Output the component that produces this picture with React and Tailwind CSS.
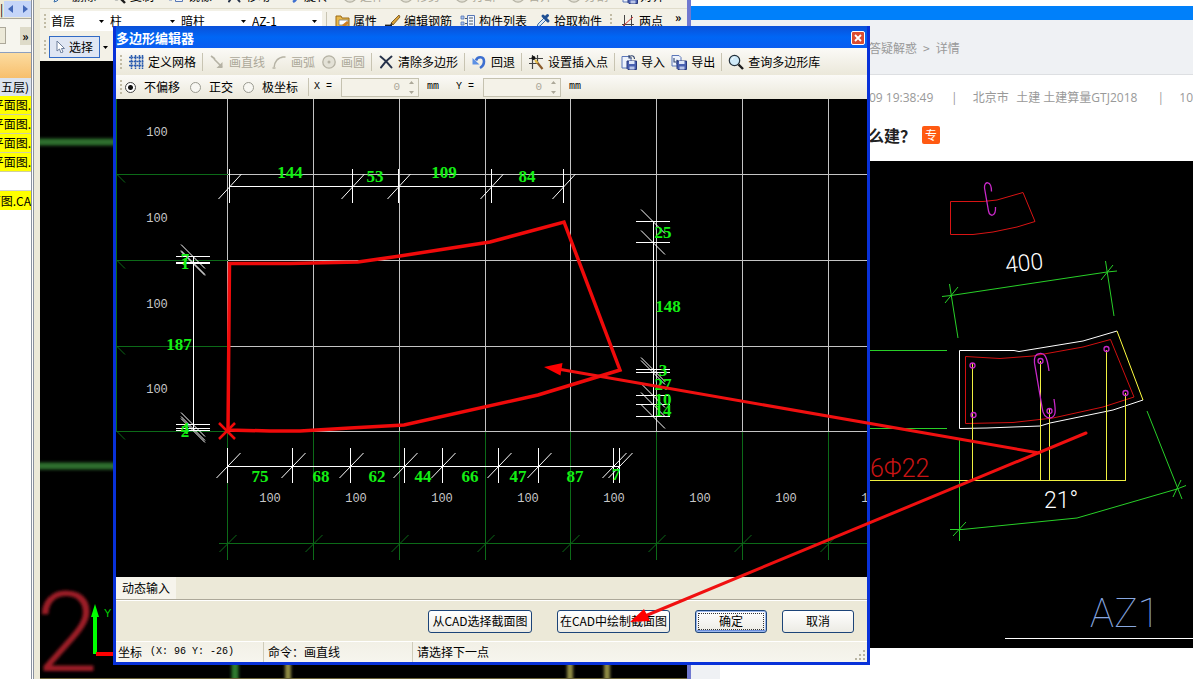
import React from "react";

const UI = "font-['Liberation_Sans','Noto_Sans_CJK_SC',sans-serif]";
const CN = "font-['Noto_Sans_CJK_SC',sans-serif]";
const WEB = "font-['Open_Sans','Noto_Sans_CJK_SC',sans-serif]";

function Grip() {
  return (
    <span className="flex shrink-0 flex-col gap-[2px]">
      {[0, 1, 2, 3].map((i) => (
        <span key={i} className="h-[2px] w-[2px] bg-[#c1bba5]" />
      ))}
    </span>
  );
}

function Sep() {
  return <span className="h-[18px] w-px shrink-0 bg-[#c8c4b2]" />;
}

/* ---------- icons ---------- */
function Icon({ children }) {
  return (
    <svg className="block h-4 w-4 shrink-0" viewBox="0 0 16 16" fill="none">
      {children}
    </svg>
  );
}
const GridIcon = () => (
  <Icon>
    <path d="M3.500 1v14M7.500 1v14M11.500 1v14M1 3.500h15M1 7.500h15M1 11.500h15M14.500 1v14" stroke="#2f5fb0" strokeWidth="1.500" strokeDasharray="2 .5" />
  </Icon>
);
const LineIcon = () => (
  <Icon>
    <path d="M2 2l4 3M5 5l8 8" stroke="#b5b2a4" strokeWidth="1.600" />
    <path d="M13.500 8v6h-6z" fill="#b5b2a4" />
  </Icon>
);
const ArcIcon = () => (
  <Icon>
    <path d="M3 14C3 8 7 3 13 3" stroke="#b5b2a4" strokeWidth="1.500" />
    <path d="M1.500 13h3v2h-3zM11.500 2h3v2h-3z" fill="#c5c2b4" />
  </Icon>
);
const CircleIcon = () => (
  <Icon>
    <circle cx="8" cy="8" r="6.200" fill="#e3e1d6" stroke="#b5b2a4" strokeWidth="1.300" />
    <circle cx="8" cy="8" r="1.500" fill="#b5b2a4" />
  </Icon>
);
const CrossIcon = () => (
  <Icon>
    <path d="M2.500 2.500c4 3 8 7 11 11M13.500 2.500c-4 3-8 7-10.500 11" stroke="#26324a" strokeWidth="2" strokeLinecap="round" />
  </Icon>
);
const UndoIcon = () => (
  <Icon>
    <path d="M5 6.500C6.500 2 13 2 13 7.500c0 3-1.500 5-4 6.500" stroke="#3d6fd0" strokeWidth="2.600" />
    <path d="M1.500 4v6.500h7z" fill="#5c90e4" />
  </Icon>
);
const InsertIcon = () => (
  <Icon>
    <path d="M4.500 1v14M9.500 1v8M1 4.500h14M1 9.500h8" stroke="#444" strokeWidth="1.200" />
    <circle cx="5.500" cy="4" r="2" fill="#111" />
    <path d="M8 7l6.500 8" stroke="#8a5a2a" strokeWidth="2.200" />
    <path d="M7 6l2.500 3" stroke="#e6c04a" strokeWidth="2" />
  </Icon>
);
const Disk = () => (
  <>
    <path d="M6 7h9.500v8.500H7L6 14.500z" fill="#4a60b0" stroke="#28387c" />
    <path d="M8 7h5.500v3H8z" fill="#dfe6f8" />
    <path d="M8.500 12.500h5v3h-5z" fill="#b9c4e8" />
  </>
);
const ImportIcon = () => (
  <Icon>
    <path d="M1 2.500h7l2 2V14H1z" fill="#eef3fc" stroke="#5b76b8" />
    <path d="M13.500 5C13.500 2 11 1 8.500 2.500M8 1v3h3" stroke="#30446e" strokeWidth="1.100" />
    <Disk />
  </Icon>
);
const ExportIcon = () => (
  <Icon>
    <path d="M1 1.500h7l2 2V12H1z" fill="#eef3fc" stroke="#5b76b8" />
    <path d="M3 4v4h4M5.500 6L8 8l-2.500 2" stroke="#30446e" strokeWidth="1.100" />
    <Disk />
  </Icon>
);
const SearchIcon = () => (
  <Icon>
    <circle cx="6.500" cy="6.500" r="5.200" fill="#cfeaf8" stroke="#25323c" strokeWidth="1.200" />
    <path d="M10.500 10.500l4.500 4.500" stroke="#1b1b1b" strokeWidth="2.400" />
    <path d="M4 6c0-1.500 1-2.500 2.500-2.500" stroke="#fff" />
  </Icon>
);
const PropertyIcon = () => (
  <Icon>
    <path d="M1 3h5l1 2h7v9H1z" fill="#e9b94b" stroke="#9a6b16" />
    <path d="M4 7h9v5H4z" fill="#fff" stroke="#777" strokeWidth=".8" />
    <path d="M7 12l5-4 2 2-5 4z" fill="#d07f20" />
  </Icon>
);
const PenIcon = () => (
  <Icon>
    <path d="M6 10l8-8 1 2-7 8z" fill="#d9a33a" stroke="#6d4a12" strokeWidth=".8" />
    <path d="M0 12.500h7" stroke="#222" strokeWidth="1.800" />
    <path d="M5 12.500l3-1.500-2-1z" fill="#222" />
  </Icon>
);
const ListIcon = () => (
  <Icon>
    <path d="M1 3h3v3H1zM1 9h3v3H1z" fill="#a9c2ec" stroke="#5677b6" strokeWidth=".8" />
    <path d="M7.500 2.500h7v11h-7z" fill="#f2f6fd" stroke="#5677b6" />
    <path d="M9 5h4M9 8h4M9 11h4M5 5.500h2M5 10.500h2" stroke="#456" />
  </Icon>
);
const PickIcon = () => (
  <Icon>
    <path d="M2 14l1-3 6-6 2 2-6 6z" fill="#dbe9f7" stroke="#3a6ea8" />
    <path d="M8 3l5 5M10 5l2.500-2.500" stroke="#1f4f92" strokeWidth="3" strokeLinecap="round" />
  </Icon>
);
const TwoPointIcon = () => (
  <Icon>
    <path d="M4.500 2v12M11.500 2v12M2 11.500h12" stroke="#444" />
    <path d="M3 13L13 4" stroke="#c33" />
  </Icon>
);

/* ---------- left tree panel ---------- */
function SidePanel() {
  const yellow = ["平面图.", "平面图.", "平面图.", "平面图."];
  return (
    <aside className={`flex w-10 shrink-0 bg-[#ece9d8] ${CN}`}>
      <div className="flex w-[31px] flex-col overflow-hidden bg-white text-xs leading-[18px]">
        <div className="flex h-[19px] shrink-0 items-center border-b border-[#aca899] bg-[#ece9d8]">
          <span className="w-1 shrink-0">|</span>
          <div className="flex h-4 flex-1 items-center justify-center gap-2 bg-[#c5d5f8]">
            <svg className="h-2 w-[6px]" viewBox="0 0 6 8"><path d="M5 0v8L0 4z" fill="#4468b8" /></svg>
            <svg className="h-2 w-[6px]" viewBox="0 0 6 8"><path d="M1 0v8l5-4z" fill="#4468b8" /></svg>
          </div>
        </div>
        <div className="flex h-[33px] shrink-0 items-center justify-between bg-[#f6f5ee]">
          <span className="h-[17px] w-[6px] border border-l-0 border-[#aca899] bg-[#ece9d8]" />
          <button type="button" className="flex h-[18px] w-[11px] items-center justify-center bg-[#dedbc9] font-bold leading-none">»</button>
        </div>
        <div className="h-[26px] shrink-0 border-t border-[#8b9fc0] bg-gradient-to-b from-[#fcdca0] to-[#f7bf6c]" />
        <div className="flex h-[18px] shrink-0 items-center justify-end whitespace-nowrap bg-[#dbe3ee] pr-[2px]">五层)</div>
        {yellow.map((t, i) => (
          <div key={i} className="flex h-[19px] shrink-0 items-center justify-end whitespace-nowrap border-b border-[#cfcfa0] bg-[#ffff00]">{t}</div>
        ))}
        <div className="h-[19px] shrink-0 border-b border-[#d0d0d0]" />
        <div className="flex h-[19px] shrink-0 items-center justify-end whitespace-nowrap bg-[#ffff00]">面图.CA</div>
      </div>
      <div className="w-[3px] border-x border-[#8a919e] bg-white" />
    </aside>
  );
}

/* ---------- CAD application behind the dialog ---------- */
function ToolSelect({ label, value, wide }) {
  return (
    <label className={`flex h-5 shrink-0 items-center justify-between bg-white pr-[5px] ${wide ? "w-[71px]" : "w-[59px]"}`}>
      <select aria-label={label} className="w-12 appearance-none bg-transparent pl-px outline-none">
        <option>{value}</option>
      </select>
      <svg className="h-[3px] w-[5px]" viewBox="0 0 5 3"><path d="M0 0h5L2.500 3z" /></svg>
    </label>
  );
}

function CadApp() {
  return (
    <section className={`flex w-[651px] shrink-0 flex-col border-r-4 border-[#7078d0] bg-[#f3f1e7] text-xs ${CN}`}>
      <div className="h-[9px] shrink-0 overflow-hidden border-b border-[#e0dccb]">
        <div className="-mt-[17px] flex h-[26px] items-center gap-[14px] whitespace-nowrap pl-3 leading-[16px]">
          <span className="flex gap-1"><PickIcon />删除</span>
          <span className="flex gap-1"><SearchIcon />复制</span>
          <span className="flex gap-1"><ListIcon />镜像</span>
          <span className="flex gap-1"><CrossIcon />移动</span>
          <span className="flex gap-1"><UndoIcon />旋转</span>
          {["延伸", "修剪", "打断", "合并"].map((t) => (
            <span key={t} className="flex gap-[2px] text-[#aca899]"><CircleIcon />{t}</span>
          ))}
          <span className="flex gap-[2px] text-[#aca899]"><CircleIcon />分割</span>
          <span className="flex gap-[2px]"><ImportIcon />对齐</span>
        </div>
      </div>
      <div className="flex h-6 shrink-0 items-center whitespace-nowrap pl-1 pr-2">
        <Grip />
        <div className="ml-1 flex">
          <ToolSelect label="楼层" value="首层" />
          <ToolSelect label="构件类型" value="柱" wide />
          <ToolSelect label="构件" value="暗柱" wide />
          <ToolSelect label="名称" value="AZ-1" wide />
        </div>
        <div className="ml-1 flex flex-1 items-center gap-2">
          <Sep />
          <button type="button" className="flex items-center gap-[2px]"><PropertyIcon />属性</button>
          <button type="button" className="flex items-center gap-[3px]"><PenIcon />编辑钢筋</button>
          <button type="button" className="flex items-center gap-[3px]"><ListIcon />构件列表</button>
          <button type="button" className="flex items-center gap-[3px]"><PickIcon />拾取构件</button>
          <Grip />
          <button type="button" className="flex items-center gap-[3px]"><TwoPointIcon />两点</button>
          <button type="button" aria-label="更多" className="-mt-2 ml-1 font-bold">»</button>
        </div>
      </div>
      <div className="flex h-7 shrink-0 items-center gap-[3px] pl-1">
        <Grip />
        <button type="button" className="flex h-[22px] w-[51px] items-center justify-center gap-1 whitespace-nowrap border border-[#316ac5] bg-[#dfe6f3]">
          <svg className="h-3 w-[9px]" viewBox="0 0 9 12"><path d="M1 0v10l2.500-2 1.500 4 2-1-1.500-3.500H8.500z" fill="#fff" stroke="#6d7f9c" /></svg>
          选择
        </button>
        <svg className="h-[3px] w-[5px]" viewBox="0 0 5 3"><path d="M0 0h5L2.500 3z" /></svg>
      </div>
      <div className="min-h-[618px] flex-1 overflow-hidden bg-black">
        <svg className="block h-[618px] w-[647px]" viewBox="40 61 647 618">
          <defs>
            <filter id="soft"><feGaussianBlur stdDeviation="1.500" /></filter>
          </defs>
          <g filter="url(#soft)">
            <path d="M30 142h100M30 466h100" stroke="#2f6e2f" strokeWidth="7" />
            <path d="M235 650v40" stroke="#2f7a2f" strokeWidth="7" />
            <path d="M288 650v40M570 650v40M607 650v40" stroke="#8f8a45" strokeWidth="6" />
            <text x="36" y="671" fontSize="112" fill="#9c1f26" className="font-['Roboto','Liberation_Sans',sans-serif] font-light">2</text>
          </g>
          <path d="M40 678.500h647" stroke="#6a6238" />
          <path d="M95 654V614" stroke="#00ff00" strokeWidth="4" />
          <path d="M95 604l4 13h-8z" fill="#00ff00" />
          <path d="M96 654h20" stroke="#f00" strokeWidth="4" />
          <text x="104" y="617" fontSize="11" fill="#00d000" className="font-['Liberation_Sans',sans-serif]">Y</text>
        </svg>
      </div>
    </section>
  );
}

/* ---------- web page on the right ---------- */
function SectionDrawing() {
  const stick = "font-['Roboto','Liberation_Sans',sans-serif] font-light";
  return (
    <svg className="block h-[487px] w-[323px]" viewBox="870 161 323 487" fill="none">
      <path d="M950.500 201.500H983L997 200L1023 192.500L1035 221.500L1017 227L993 232L973 234.500H950.500Z" stroke="#d81414" />
      <path d="M991.500 191.500C991.500 180 984 181 984.500 188L988.500 211C990 218 996 216 995.500 207" stroke="#c828c8" strokeWidth="1.300" />
      <g stroke="#28d028">
        <path d="M942 296.500L951 295.500L1107 272L1117 271M949.500 284L958 338M1105.500 261L1114 316M945 303L958 287M1101 280L1113 265" />
        <path d="M870 350.500H947M870 428.500H947" />
        <path d="M959.500 440V541M950 529.500H962L1077 518L1177 489L1186 485.500M1147 411L1182 499M953 536L966 522M1173 497L1181 480" />
      </g>
      <path d="M1117 331L1083 341L1019 351.500L1014 350.500H959.500V428.500L987 428L1040 426L1050 423L1113 410L1143 400" stroke="#fff" />
      <path d="M1117 331L1143 400" stroke="#ffff40" />
      <path d="M965.500 356.500L1000 358.500L1033 356L1083 347L1110.500 339.500L1134 397L1103 407L1053 418L1013 422.500L965.500 423.500Z" stroke="#d01010" />
      <g stroke="#f0f040">
        <path d="M972.500 363V480M1040.500 361V480M1049.500 409V480M1106.500 350V480M1125.500 393V480M870 480.500H1126" />
      </g>
      <g stroke="#c828c8" strokeWidth="1.300">
        <circle cx="972.500" cy="365.500" r="2.500" />
        <circle cx="973.500" cy="415" r="2.500" />
        <circle cx="1040.500" cy="361" r="2.500" />
        <circle cx="1049.500" cy="411" r="2.500" />
        <circle cx="1106.500" cy="349" r="2.500" />
        <circle cx="1125.500" cy="393" r="2.500" />
        <path d="M1049 371C1047 355 1044 353 1040 353.500C1035 354 1034 357 1034.500 363L1042 407C1043 416 1046 418 1050 418C1056 417 1056 412 1054 399" />
      </g>
      <path d="M1005 638.500H1193" stroke="#fff" />
      <text x="1024" y="271" fontSize="23" textAnchor="middle" transform="rotate(-6 1024 262)" fill="#fff" className={stick}>400</text>
      <text x="1061" y="508" fontSize="23" textAnchor="middle" fill="#fff" className={stick}>21°</text>
      <text x="870" y="477" fontSize="25" fill="#c81414" className={stick}>6Φ22</text>
      <text x="1090" y="627" fontSize="40" fill="#88a8e0" className="font-['Roboto','Liberation_Sans',sans-serif] font-thin">AZ1</text>
    </svg>
  );
}

function WebPage() {
  return (
    <main className="flex min-w-0 flex-1 flex-col bg-[#eff1f4]">
      <div className="h-[6px] shrink-0 bg-white" />
      <div className="h-[14px] shrink-0 bg-[#0080fa]" />
      <nav className={`flex h-[55px] shrink-0 items-center gap-[6px] whitespace-nowrap border-b border-[#dddfe2] pl-[178px] pt-[2px] text-xs text-[#999] ${CN}`}>
        <a href="#qa">答疑解惑</a>
        <span>&gt;</span>
        <a href="#detail">详情</a>
      </nav>
      <article className="ml-[29px] flex flex-1 flex-col overflow-hidden bg-white">
        <div className={`flex h-[46px] shrink-0 items-center whitespace-nowrap pl-[149px] text-xs text-[#999] ${WEB}`}>
          <span className="w-[83px]">09 19:38:49</span>
          <span className="w-[22px]">|</span>
          <span className="w-11">北京市</span>
          <span className="w-[143px]">土建 土建算量GTJ2018</span>
          <span className="w-[22px]">|</span>
          <span>10</span>
        </div>
        <h1 className={`flex h-10 shrink-0 items-center gap-[6px] whitespace-nowrap pb-3 pl-[148px] text-base font-bold text-[#222] ${CN}`}>
          <span>么建？</span>
          <span className="flex h-[18px] w-[18px] items-center justify-center rounded-[2px] bg-[#ff5a12] text-xs font-normal text-white">专</span>
        </h1>
        <div className="shrink-0 bg-black pl-[150px]">
          <SectionDrawing />
        </div>
      </article>
    </main>
  );
}

/* ---------- polygon editor ---------- */
const COLS = [227.5, 313.5, 399.5, 485.5, 570.5, 656.5, 742.5, 828.5];
const ROWS = [174.5, 260.5, 346.5, 431.5];
const TOP_TICKS = [229.5, 352.5, 398.5, 491.5, 563.5];
const BOTTOM_TICKS = [227.5, 292.5, 350.5, 404.5, 442.5, 498.5, 538.5, 613.5, 619.5];
const RIGHT_TICKS = [221.5, 242.5, 369.5, 372.5, 395.5, 404.5, 416.5];
const LEFT_TICKS = [256.5, 262.5, 263.5, 424.5, 428.5, 430.5];
const DIMS = [
  [290, 178, "144"], [375, 182, "53"], [444, 178, "109"], [527, 182, "84"],
  [260, 482, "75"], [321, 482, "68"], [377, 482, "62"], [423, 482, "44"], [470, 482, "66"],
  [518, 482, "47"], [575, 482, "87"], [616, 480, "7"],
  [663, 238, "25"], [668, 312, "148"], [663, 376, "3"], [663, 390, "27"], [663, 405, "10"], [663, 416, "14"],
  [185, 265, "7"], [185, 269, "1"], [179, 350, "187"], [185, 434, "4"], [185, 437, "2"],
];

function PolygonCanvas() {
  return (
    <svg className="block h-[478px] w-full bg-black" viewBox="116 99 751 478" preserveAspectRatio="xMinYMin slice" fill="none">
      <g stroke="#c4c4c4">
        {COLS.map((x) => <path key={x} d={`M${x} 99V431`} />)}
        {ROWS.map((y) => <path key={y} d={`M228 ${y}H867`} />)}
      </g>
      <g stroke="#0c6a18">
        <path d="M116.500 99V432M219 543.500H867" />
        {ROWS.map((y) => <path key={y} d={`M116 ${y}H228M117 ${y}l8 8`} />)}
        {COLS.map((x) => <path key={x} d={`M${x} 432V560M${x - 8} 552l17 -17`} />)}
      </g>
      <g fill="#c8c8c8" fontSize="12" textAnchor="middle" className="font-['Liberation_Mono',monospace]">
        {[136, 222, 308, 393].map((y) => <text key={y} x="157" y={y}>100</text>)}
        {[270, 356, 442, 528, 614, 700, 786, 872].map((x) => <text key={x} x={x} y="502">100</text>)}
      </g>
      <g stroke="#fff">
        <path d="M229 186.500H564M227 466.500H620M193.500 257V431M653.500 221V417" />
        {TOP_TICKS.map((x) => <path key={x} d={`M${x} 169V203M${x - 11} 199l23 -25`} />)}
        {BOTTOM_TICKS.map((x) => <path key={x} d={`M${x} 448V483M${x - 11} 478l24 -25`} />)}
        {RIGHT_TICKS.map((y) => <path key={y} d={`M636 ${y}H670M641 ${y - 12}l24 24`} />)}
        {LEFT_TICKS.map((y) => <path key={y} d={`M176 ${y}H210M181 ${y - 12}l24 24`} />)}
      </g>
      <g fill="#14f014" fontSize="17" fontWeight="bold" textAnchor="middle" className="font-['Liberation_Serif',serif]">
        {DIMS.map(([x, y, t]) => <text key={`${x}-${y}`} x={x} y={y}>{t}</text>)}
      </g>
      <path d="M229.500 263.500H290L358 262L400 256L490 242L564 222L620 370L538 395L404 425L350 428L300 431H270L228 430Z" stroke="#f00a0a" strokeWidth="3.500" />
      <path d="M219 423l16 16M235 423l-16 16" stroke="#f00a0a" strokeWidth="2.500" />
    </svg>
  );
}

function Tool({ icon, children, disabled }) {
  return (
    <button type="button" disabled={disabled} className="flex shrink-0 items-center gap-1 whitespace-nowrap disabled:text-[#aca899]">
      {icon}
      {children}
    </button>
  );
}

function Radio({ label, checked }) {
  return (
    <label className="flex shrink-0 items-center gap-2 whitespace-nowrap">
      <input
        type="radio"
        name="offset"
        defaultChecked={checked}
        className="h-[11px] w-[11px] appearance-none rounded-full border border-[#9a9a90] bg-[#f8f7f2] checked:border-[#444] checked:bg-[radial-gradient(circle,#111_0_2px,#fff_3px)]"
      />
      {label}
    </label>
  );
}

function Coord({ label }) {
  return (
    <label className="flex items-center gap-2 whitespace-pre">
      <span className="w-[19px] font-['Liberation_Mono',monospace] text-[10px]">{label} =</span>
      <span className="flex h-[19px] w-[78px] items-center justify-end gap-[9px] border border-[#c5c2b0] bg-[#f4f2e8] pr-1">
        <input type="text" disabled defaultValue="0" className="w-10 bg-transparent text-right font-['Liberation_Mono',monospace] text-[11px] text-[#aca899]" />
        <svg className="h-[13px] w-[5px]" viewBox="0 0 5 13"><path d="M0 3h5L2.500 0zM0 10h5l-2.500 3z" fill="#aca899" /></svg>
      </span>
      <span className="w-[18px] font-['Liberation_Mono',monospace] text-[10px]">mm</span>
    </label>
  );
}

function DialogButton({ children, width, primary }) {
  return (
    <button
      type="button"
      className={`h-[23px] shrink-0 whitespace-nowrap rounded-[3px] border border-[#1c4478] bg-gradient-to-b from-white to-[#ecebe4] ${width} ${primary ? "shadow-[inset_0_0_0_1px_#9db9ee,inset_0_-2px_0_#6d8fdc] outline-dotted outline-1 -outline-offset-4 outline-[#333]" : ""}`}
    >
      {children}
    </button>
  );
}

function PolygonDialog() {
  const bar = "flex shrink-0 items-center bg-gradient-to-b from-[#fbfaf7] to-[#ebe8da]";
  return (
    <div role="dialog" aria-label="多边形编辑器" className={`absolute left-[113px] top-[26px] flex w-[757px] flex-col border-[3px] border-t-0 border-[#0831d9] bg-[#ece9d8] text-xs leading-4 text-black ${CN}`}>
      <header className="flex h-[22px] items-center justify-between bg-gradient-to-b from-[#0a50d8] via-[#0066f5] to-[#0a5cf0] pr-[2px] pt-[2px]">
        <h2 className="text-[13px] font-bold text-white">多边形编辑器</h2>
        <button type="button" aria-label="关闭" className="flex h-[14px] w-[14px] items-center justify-center rounded-[2px] border border-white bg-[#dc4c30]">
          <svg className="h-2 w-2" viewBox="0 0 8 8"><path d="M1 1l6 6M7 1L1 7" stroke="#fff" strokeWidth="1.800" /></svg>
        </button>
      </header>
      <div className={`${bar} h-[27px] gap-[6px] pl-1`}>
        <Grip />
        <Tool icon={<GridIcon />}>定义网格</Tool>
        <Sep />
        <Tool disabled icon={<LineIcon />}>画直线</Tool>
        <Tool disabled icon={<ArcIcon />}>画弧</Tool>
        <Tool disabled icon={<CircleIcon />}>画圆</Tool>
        <Sep />
        <Tool icon={<CrossIcon />}>清除多边形</Tool>
        <Sep />
        <Tool icon={<UndoIcon />}>回退</Tool>
        <Sep />
        <Tool icon={<InsertIcon />}>设置插入点</Tool>
        <Sep />
        <Tool icon={<ImportIcon />}>导入</Tool>
        <Tool icon={<ExportIcon />}>导出</Tool>
        <Sep />
        <Tool icon={<SearchIcon />}>查询多边形库</Tool>
      </div>
      <div className={`${bar} h-6 gap-[10px] pl-1`}>
        <div className="flex items-center gap-[3px]">
          <Grip />
          <Radio label="不偏移" checked />
        </div>
        <Radio label="正交" />
        <Radio label="极坐标" />
        <div className="flex items-center gap-[5px]">
          <Sep />
          <Coord label="X" />
          <span className="w-px" />
          <Coord label="Y" />
        </div>
      </div>
      <PolygonCanvas />
      <div className="flex h-[23px] items-stretch border-b border-[#aca899]">
        <span className="flex items-center bg-[#f6f4ec] px-[6px]">动态输入</span>
      </div>
      <div className="flex h-[41px] items-center justify-end border-t border-white pr-[13px]">
        <div className="flex gap-[25px]">
          <DialogButton width="w-[104px]">从CAD选择截面图</DialogButton>
          <DialogButton width="w-[113px]">在CAD中绘制截面图</DialogButton>
          <div className="flex gap-[15px]">
            <DialogButton width="w-[72px]" primary>确定</DialogButton>
            <DialogButton width="w-[72px]">取消</DialogButton>
          </div>
        </div>
      </div>
      <footer className="flex h-[21px] items-stretch gap-[2px] border-t border-white bg-gradient-to-b from-[#f2f0e6] to-[#f6f5ee]">
        <span className="flex w-[148px] items-center gap-2 border-r border-[#cfccba] pl-[2px]">
          坐标
          <span className="font-['Liberation_Mono',monospace] text-[10px]">(X: 96 Y: -26)</span>
        </span>
        <span className="flex w-[147px] items-center border-r border-[#cfccba] pl-[2px]">命令：画直线</span>
        <span className="flex flex-1 items-center pl-[2px]">请选择下一点</span>
        <svg className="h-3 w-3 self-end" viewBox="0 0 12 12" fill="#b8b4a2">
          <path d="M8 0h2v2H8zM8 4h2v2H8zM4 4h2v2H4zM8 8h2v2H8zM4 8h2v2H4zM0 8h2v2H0z" />
        </svg>
      </footer>
    </div>
  );
}

function Annotations() {
  return (
    <svg className="pointer-events-none absolute left-0 top-0 h-[679px] w-[1193px]" viewBox="0 0 1193 679" fill="none">
      <path d="M1039 453L558 369M1086 433L645 616" stroke="#f01010" strokeWidth="3" strokeLinecap="round" />
      <path d="M544 367L562.500 363L560.500 375.500Z" fill="#f00" />
      <path d="M630 622L644 609L650 621Z" fill="#f00" />
    </svg>
  );
}

export default function App() {
  return (
    <div className={`relative flex min-h-screen w-full overflow-hidden bg-white text-black ${UI}`}>
      <SidePanel />
      <CadApp />
      <WebPage />
      <PolygonDialog />
      <Annotations />
    </div>
  );
}
